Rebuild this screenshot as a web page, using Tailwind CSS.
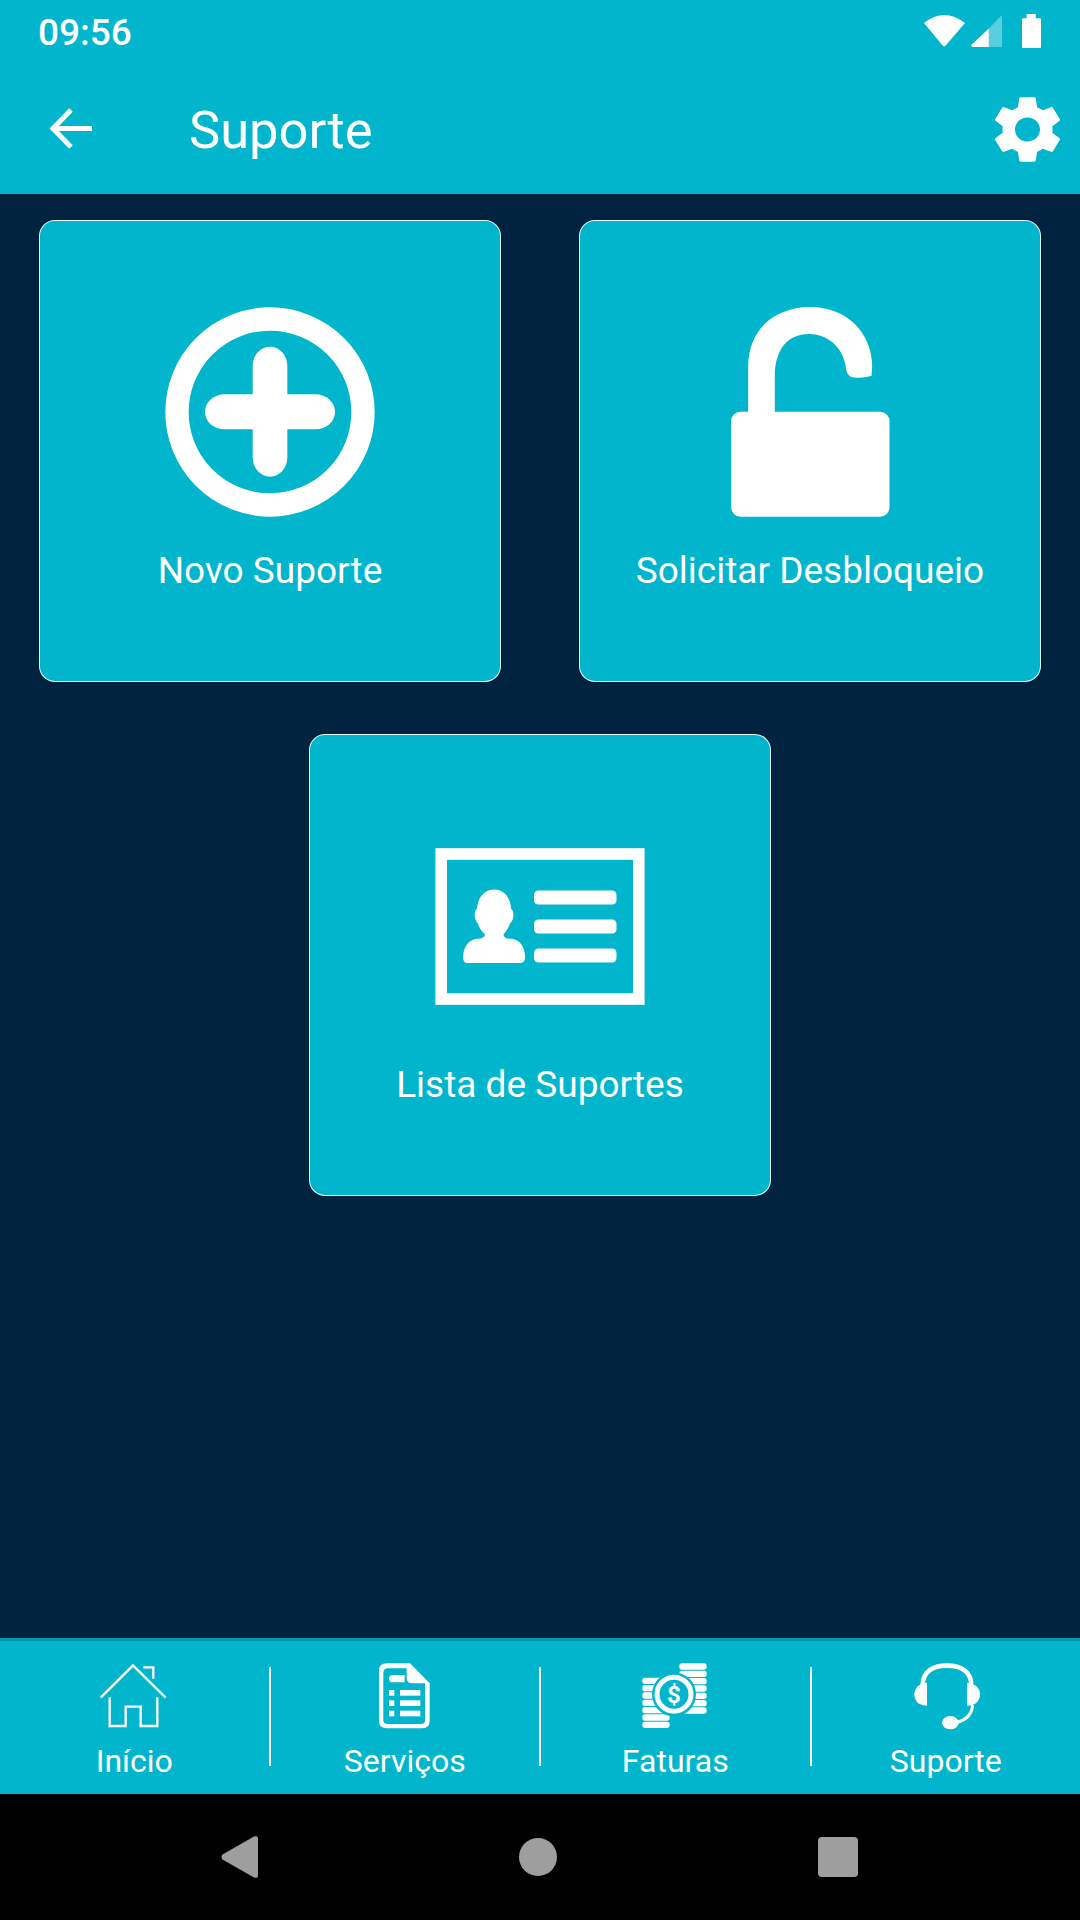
<!doctype html>
<html lang="pt-BR">

<head>
  <meta charset="utf-8" />
  <title>Suporte</title>
  <script src="https://cdn.jsdelivr.net/npm/@tailwindcss/browser@4"></script>
</head>

<body>
  <div class="w-[1080px] h-[1920px] flex flex-col bg-[#002340] text-white font-['Roboto',sans-serif]">

    <!-- status bar -->
    <div class="h-[66px] flex items-center justify-between pl-[38px] pr-[39px] bg-[#00b5cc]">
      <span class="text-[37px] leading-[42px] font-medium">09:56</span>
      <div class="flex items-center mb-[4px]">
        <svg class="w-[41px] h-[32px]" viewBox="28 28 122 95" preserveAspectRatio="none" fill="#fff">
          <path d="M28 52Q88 4 150 52L92 119Q88 123 84 119Z" />
        </svg>
        <svg class="w-[31px] h-[32px] ml-[6px]" viewBox="168 32 94 95" preserveAspectRatio="none">
          <path d="M168 122L222 72V127H172Z" fill="#fff" />
          <path d="M222 72L262 32V127H222Z" fill="#fff" fill-opacity=".35" />
        </svg>
        <svg class="w-[19px] h-[34px] ml-[20px]" viewBox="321 27 58 102" preserveAspectRatio="none" fill="#fff">
          <path d="M335 27H363V40H376Q379 40 379 43V126Q379 129 376 129H324Q321 129 321 126V43Q321 40 324 40H335Z" />
        </svg>
      </div>
    </div>

    <!-- toolbar -->
    <div class="h-[128px] flex items-center pl-[50px] pr-[20px] bg-[#00b5cc]">
      <svg class="w-[43px] h-[41px] mb-[3px]" viewBox="0 0 43 41" fill="none" stroke="#fff" stroke-width="5">
        <path d="M42 20.5H4" />
        <path d="M21 2L3 20.5L21 39" />
      </svg>
      <span class="ml-[96px] text-[52.5px] leading-[58px]">Suporte</span>
      <svg class="ml-auto w-[65px] h-[67px] mb-[2px]" viewBox="2.65 2 18.7 20" preserveAspectRatio="none" fill="#fff">
        <path d="M19.14 12.94c.04-.3.06-.61.06-.94 0-.32-.02-.64-.07-.94l2.03-1.58c.18-.14.23-.41.12-.61l-1.92-3.32c-.12-.22-.37-.29-.59-.22l-2.39.96c-.5-.38-1.03-.7-1.62-.94l-.36-2.54c-.04-.24-.24-.41-.48-.41h-3.84c-.24 0-.43.17-.47.41l-.36 2.54c-.59.24-1.13.57-1.62.94l-2.39-.96c-.22-.08-.47 0-.59.22L2.74 8.87c-.12.21-.08.47.12.61l2.03 1.58c-.05.3-.09.63-.09.94s.02.64.07.94l-2.03 1.58c-.18.14-.23.41-.12.61l1.92 3.32c.12.22.37.29.59.22l2.39-.96c.5.38 1.03.7 1.62.94l.36 2.54c.05.24.24.41.48.41h3.84c.24 0 .44-.17.47-.41l.36-2.54c.59-.24 1.13-.56 1.62-.94l2.39.96c.22.08.47 0 .59-.22l1.92-3.32c.12-.22.07-.47-.12-.61l-2.01-1.58zM12 15.6c-1.98 0-3.6-1.62-3.6-3.6s1.62-3.6 3.6-3.6 3.6 1.62 3.6 3.6-1.62 3.6-3.6 3.6z" />
      </svg>
    </div>

    <!-- cards -->
    <div class="flex-1 flex flex-col gap-[52px] pt-[26px] px-[39px]">
      <div class="flex justify-between">
        <div class="w-[462px] h-[462px] flex flex-col items-center pt-[86px] rounded-[16px] border border-white/90 bg-[#00b5cc]">
          <div class="h-[210px] flex items-center">
            <svg class="w-[210px] h-[210px]" viewBox="405 291 630 630" fill="#fff">
              <circle cx="720" cy="606" r="279" fill="none" stroke="#fff" stroke-width="70" />
              <rect x="668" y="410" width="104" height="390" rx="52" ry="58" />
              <rect x="525" y="553" width="390" height="105" rx="58" ry="52" />
            </svg>
          </div>
          <span class="mt-[33px] text-[37px] leading-[42px]">Novo Suporte</span>
        </div>

        <div class="w-[462px] h-[462px] flex flex-col items-center pt-[86px] rounded-[16px] border border-white/90 bg-[#00b5cc]">
          <div class="h-[210px] flex items-center">
            <svg class="w-[159px] h-[210px]" viewBox="482 291 476 630" fill="#fff">
              <rect x="482" y="605" width="475" height="315" rx="28" />
              <path d="M533 610V470C533 360 610 291 720 291C830 291 905 370 905 470L903 497C880 503 860 505 845 502C830 497 826 480 825 465C815 410 770 372 715 372C650 372 613 420 613 500V610Z" />
            </svg>
          </div>
          <span class="mt-[33px] text-[37px] leading-[42px]">Solicitar Desbloqueio</span>
        </div>
      </div>

      <div class="flex justify-center">
        <div class="w-[462px] h-[462px] flex flex-col items-center pt-[86px] rounded-[16px] border border-white/90 bg-[#00b5cc]">
          <div class="h-[210px] flex items-center">
            <svg class="w-[210px] h-[157px]" viewBox="405 352 630 472" fill="#fff">
              <rect x="423" y="370" width="594" height="436" fill="none" stroke="#fff" stroke-width="35" />
              <path d="M582 477C615 477 632 505 633 535C643 540 643 570 630 578C625 595 615 605 610 612C612 622 620 625 635 625C660 628 675 650 675 680C675 692 670 698 660 698H500C492 698 489 692 489 680C489 650 505 628 530 625C545 625 552 622 555 612C548 605 538 595 533 578C522 570 520 540 531 535C532 505 550 477 582 477Z" />
              <rect x="702" y="480" width="248" height="42" rx="13" />
              <rect x="702" y="567" width="248" height="42" rx="13" />
              <rect x="702" y="654" width="248" height="42" rx="13" />
            </svg>
          </div>
          <span class="mt-[33px] text-[37px] leading-[42px]">Lista de Suportes</span>
        </div>
      </div>
    </div>

    <!-- bottom nav -->
    <div class="h-[156px] flex border-t-[3px] border-[#0097ad] bg-[#00b5cc]">
      <div class="flex-1 flex flex-col items-center pt-[14px]">
        <svg class="w-[90px] h-[85px]" viewBox="0 0 270 255" fill="none" stroke="#fff" stroke-width="7">
          <path d="M35 128L132 31L230 128" />
          <path d="M163 37H193V71" />
          <path d="M62 127V213H110V155H155V213H205V127" />
        </svg>
        <span class="mt-[2px] text-[32px] leading-[38px]">Início</span>
      </div>
      <div class="w-[2px] h-[99px] mt-[26px] bg-white"></div>
      <div class="flex-1 flex flex-col items-center pt-[14px]">
        <svg class="w-[80px] h-[85px]" viewBox="0 0 240 255" fill="#fff">
          <path d="M65 25H135L194 85V198Q194 220 172 220H64Q42 220 42 198V48Q42 25 65 25Z" />
          <path d="M70 40H125V68Q125 85 142 85H180V195Q180 207 168 207H68Q55 207 55 195V55Q55 40 70 40Z" fill="#00b5cc" />
          <path d="M84 60H119V82H84Q72 82 72 71Q72 60 84 60Z" />
          <rect x="72" y="105" width="16" height="17" />
          <rect x="105" y="105" width="61" height="17" />
          <rect x="72" y="136" width="16" height="17" />
          <rect x="105" y="136" width="61" height="17" />
          <rect x="72" y="167" width="16" height="17" />
          <rect x="105" y="167" width="61" height="17" />
        </svg>
        <span class="mt-[2px] text-[32px] leading-[38px]">Serviços</span>
      </div>
      <div class="w-[2px] h-[99px] mt-[26px] bg-white"></div>
      <div class="flex-1 flex flex-col items-center pt-[14px]">
        <svg class="w-[90px] h-[85px]" viewBox="0 0 270 255" fill="#fff">
          <rect x="148" y="25" width="82" height="19" rx="8" />
          <rect x="148" y="47" width="82" height="19" rx="8" />
          <rect x="148" y="69" width="82" height="19" rx="8" />
          <rect x="148" y="91" width="82" height="19" rx="8" />
          <rect x="148" y="113" width="82" height="19" rx="8" />
          <rect x="148" y="135" width="82" height="19" rx="8" />
          <rect x="148" y="157" width="82" height="19" rx="8" />
          <rect x="37" y="68" width="82" height="19" rx="8" />
          <rect x="37" y="90" width="82" height="19" rx="8" />
          <rect x="37" y="112" width="82" height="19" rx="8" />
          <rect x="37" y="134" width="82" height="19" rx="8" />
          <rect x="37" y="156" width="82" height="19" rx="8" />
          <rect x="37" y="178" width="82" height="19" rx="8" />
          <rect x="37" y="200" width="82" height="19" rx="8" />
          <circle cx="132" cy="118" r="66" fill="#00b5cc" />
          <circle cx="132" cy="118" r="51" fill="none" stroke="#fff" stroke-width="15" />
          <text x="132" y="143" text-anchor="middle" font-size="72" font-weight="700">$</text>
        </svg>
        <span class="mt-[2px] text-[32px] leading-[38px]">Faturas</span>
      </div>
      <div class="w-[2px] h-[99px] mt-[26px] bg-white"></div>
      <div class="flex-1 flex flex-col items-center pt-[14px]">
        <svg class="w-[90px] h-[85px]" viewBox="0 0 270 255" fill="#fff">
          <path d="M65 92C65 50 95 32 138 32C181 32 211 50 211 92" fill="none" stroke="#fff" stroke-width="14" />
          <path d="M78 83V152C55 152 40 140 40 118C40 98 55 85 78 83Z" />
          <path d="M198 83V152C222 152 237 140 237 118C237 98 222 85 198 83Z" />
          <path d="M215 150C212 185 190 197 165 203" fill="none" stroke="#fff" stroke-width="9" />
          <ellipse cx="148" cy="203" rx="25" ry="20" />
        </svg>
        <span class="mt-[2px] text-[32px] leading-[38px]">Suporte</span>
      </div>
    </div>

    <!-- android nav -->
    <div class="h-[126px] flex items-center justify-center gap-[261px] pr-[2px] bg-black">
      <svg class="w-[37px] h-[42px]" viewBox="0 0 37 42" fill="#9e9e9e">
        <path d="M33 .6Q37-1 37 3V39Q37 43 33 41.4L1.5 23.5Q-.5 21 1.5 18.5Z" />
      </svg>
      <div class="w-[38px] h-[38px] rounded-full bg-[#9e9e9e]"></div>
      <div class="w-[40px] h-[40px] rounded-[4px] bg-[#9e9e9e]"></div>
    </div>
  </div>
</body>

</html>
